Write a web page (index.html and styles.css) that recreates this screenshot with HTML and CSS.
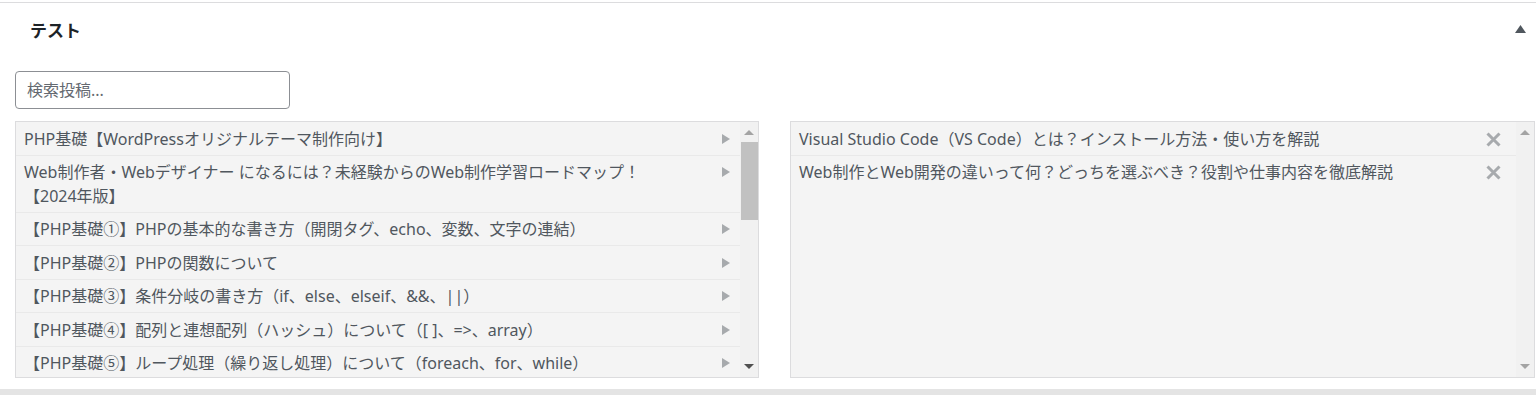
FILE: index.html
```html
<!DOCTYPE html>
<html lang="ja">
<head>
<meta charset="utf-8">
<link rel="stylesheet" href="styles.css">
</head>
<body>
<div class="postbox">
  <div class="postbox-header">
    <h2 class="title">テスト</h2>
    <span class="toggle"><svg width="11" height="8" viewBox="0 0 11 8"><polygon points="5.5,0 11,8 0,8" fill="#50575e"/></svg></span>
  </div>
  <div class="inside">
    <div class="filters">
      <input class="search" type="text" placeholder="検索投稿...">
    </div>
    <div class="selection">
      <div class="box">
        <ul class="list">
          <li class="item"><span class="text">PHP基礎【WordPressオリジナルテーマ制作向け】</span><span class="add"></span></li>
          <li class="item"><span class="text">Web制作者・Webデザイナー になるには？未経験からのWeb制作学習ロードマップ！<br>【2024年版】</span><span class="add"></span></li>
          <li class="item"><span class="text">【PHP基礎①】PHPの基本的な書き方（開閉タグ、echo、変数、文字の連結）</span><span class="add"></span></li>
          <li class="item"><span class="text">【PHP基礎②】PHPの関数について</span><span class="add"></span></li>
          <li class="item"><span class="text">【PHP基礎③】条件分岐の書き方（if、else、elseif、&amp;&amp;、||）</span><span class="add"></span></li>
          <li class="item"><span class="text">【PHP基礎④】配列と連想配列（ハッシュ）について（[ ]、=&gt;、array）</span><span class="add"></span></li>
          <li class="item"><span class="text">【PHP基礎⑤】ループ処理（繰り返し処理）について（foreach、for、while）</span><span class="add"></span></li>
        </ul>
        <div class="scrollbar">
          <span class="sb-up"></span>
          <span class="sb-thumb"></span>
          <span class="sb-down"></span>
        </div>
      </div>
      <div class="box">
        <ul class="list">
          <li class="item"><span class="text">Visual Studio Code（VS Code）とは？インストール方法・使い方を解説</span><span class="remove"><svg width="15" height="15" viewBox="0 0 15 15"><path d="M1.5 1.5 L13.5 13.5 M13.5 1.5 L1.5 13.5" stroke="#a7aaad" stroke-width="3"/></svg></span></li>
          <li class="item last"><span class="text">Web制作とWeb開発の違いって何？どっちを選ぶべき？役割や仕事内容を徹底解説</span><span class="remove"><svg width="15" height="15" viewBox="0 0 15 15"><path d="M1.5 1.5 L13.5 13.5 M13.5 1.5 L1.5 13.5" stroke="#a7aaad" stroke-width="3"/></svg></span></li>
        </ul>
        <div class="scrollbar">
          <span class="sb-up light"></span>
          <span class="sb-space"></span>
          <span class="sb-down light"></span>
        </div>
      </div>
    </div>
  </div>
</div>
<div class="footer-band"></div>
</body>
</html>
```

FILE: styles.css
```css
html, body {
  margin: 0;
  padding: 0;
  background: #fff;
}
body {
  font-family: "Noto Sans", "Noto Sans CJK JP", sans-serif;
  color: #3c434a;
}
.postbox {
  margin-top: 2px;
  border-top: 1px solid #dcdcde;
  height: 387px;
  box-sizing: border-box;
}
.postbox-header {
  display: flex;
  align-items: center;
  justify-content: space-between;
  height: 52px;
  padding: 0 10px 2px 30px;
}
.title {
  margin: 0;
  font-size: 17px;
  font-weight: 700;
  color: #1d2327;
  line-height: 1;
  font-family: "Noto Sans CJK JP", sans-serif;
}
.toggle {
  display: flex;
  width: 11px;
  height: 8px;
}
.inside {
  padding: 14px 1px 0 15px;
}
.filters {
  margin-bottom: 12px;
}
.search {
  display: block;
  width: 275px;
  height: 38px;
  box-sizing: border-box;
  border: 1px solid #8c8f94;
  border-radius: 4px;
  padding: 0 11px;
  font-family: "Noto Sans", "Noto Sans CJK JP", sans-serif;
  font-size: 16px;
  color: #2c3338;
  background: #fff;
  outline: none;
}
.search::placeholder {
  color: #646970;
}
.selection {
  display: grid;
  grid-template-columns: 744px 745px;
  column-gap: 31px;
}
.box {
  display: flex;
  height: 257px;
  box-sizing: border-box;
  border: 1px solid #dcdcde;
  background: #f4f4f4;
  overflow: hidden;
}
.list {
  flex: 1;
  margin: 0;
  padding: 0;
  list-style: none;
  overflow: hidden;
}
.item {
  display: flex;
  align-items: flex-start;
  justify-content: space-between;
  padding: 5.5px 8px 3.5px 8px;
  border-bottom: 1px solid #e9e9e9;
  font-size: 16px;
  line-height: 23.5px;
  color: #50575e;
}
.item.last {
  border-bottom: none;
}
.text {
  flex: 1;
}
.add {
  flex: none;
  width: 0;
  height: 0;
  margin: 6px 2px 0 10px;
  border-top: 5px solid transparent;
  border-bottom: 5px solid transparent;
  border-left: 8px solid #a7aaad;
}
.remove {
  flex: none;
  display: flex;
  margin: 4px 7px 0 10px;
}
.scrollbar {
  flex: none;
  width: 18px;
  background: #f1f1f1;
  display: flex;
  flex-direction: column;
  align-items: center;
}
.sb-up {
  width: 0;
  height: 0;
  margin-top: 8px;
  border-left: 5px solid transparent;
  border-right: 5px solid transparent;
  border-bottom: 5px solid #a3a3a3;
}
.sb-thumb {
  width: 17px;
  height: 78px;
  margin-top: 7px;
  background: #c1c1c1;
}
.sb-space {
  flex: 1;
}
.sb-down {
  width: 0;
  height: 0;
  margin-top: auto;
  margin-bottom: 8px;
  border-left: 5px solid transparent;
  border-right: 5px solid transparent;
  border-top: 5px solid #505050;
}
.sb-up.light {
  border-bottom-color: #a3a3a3;
}
.sb-down.light {
  border-top-color: #a3a3a3;
}
.footer-band {
  height: 20px;
  background: #e4e4e4;
}
```
